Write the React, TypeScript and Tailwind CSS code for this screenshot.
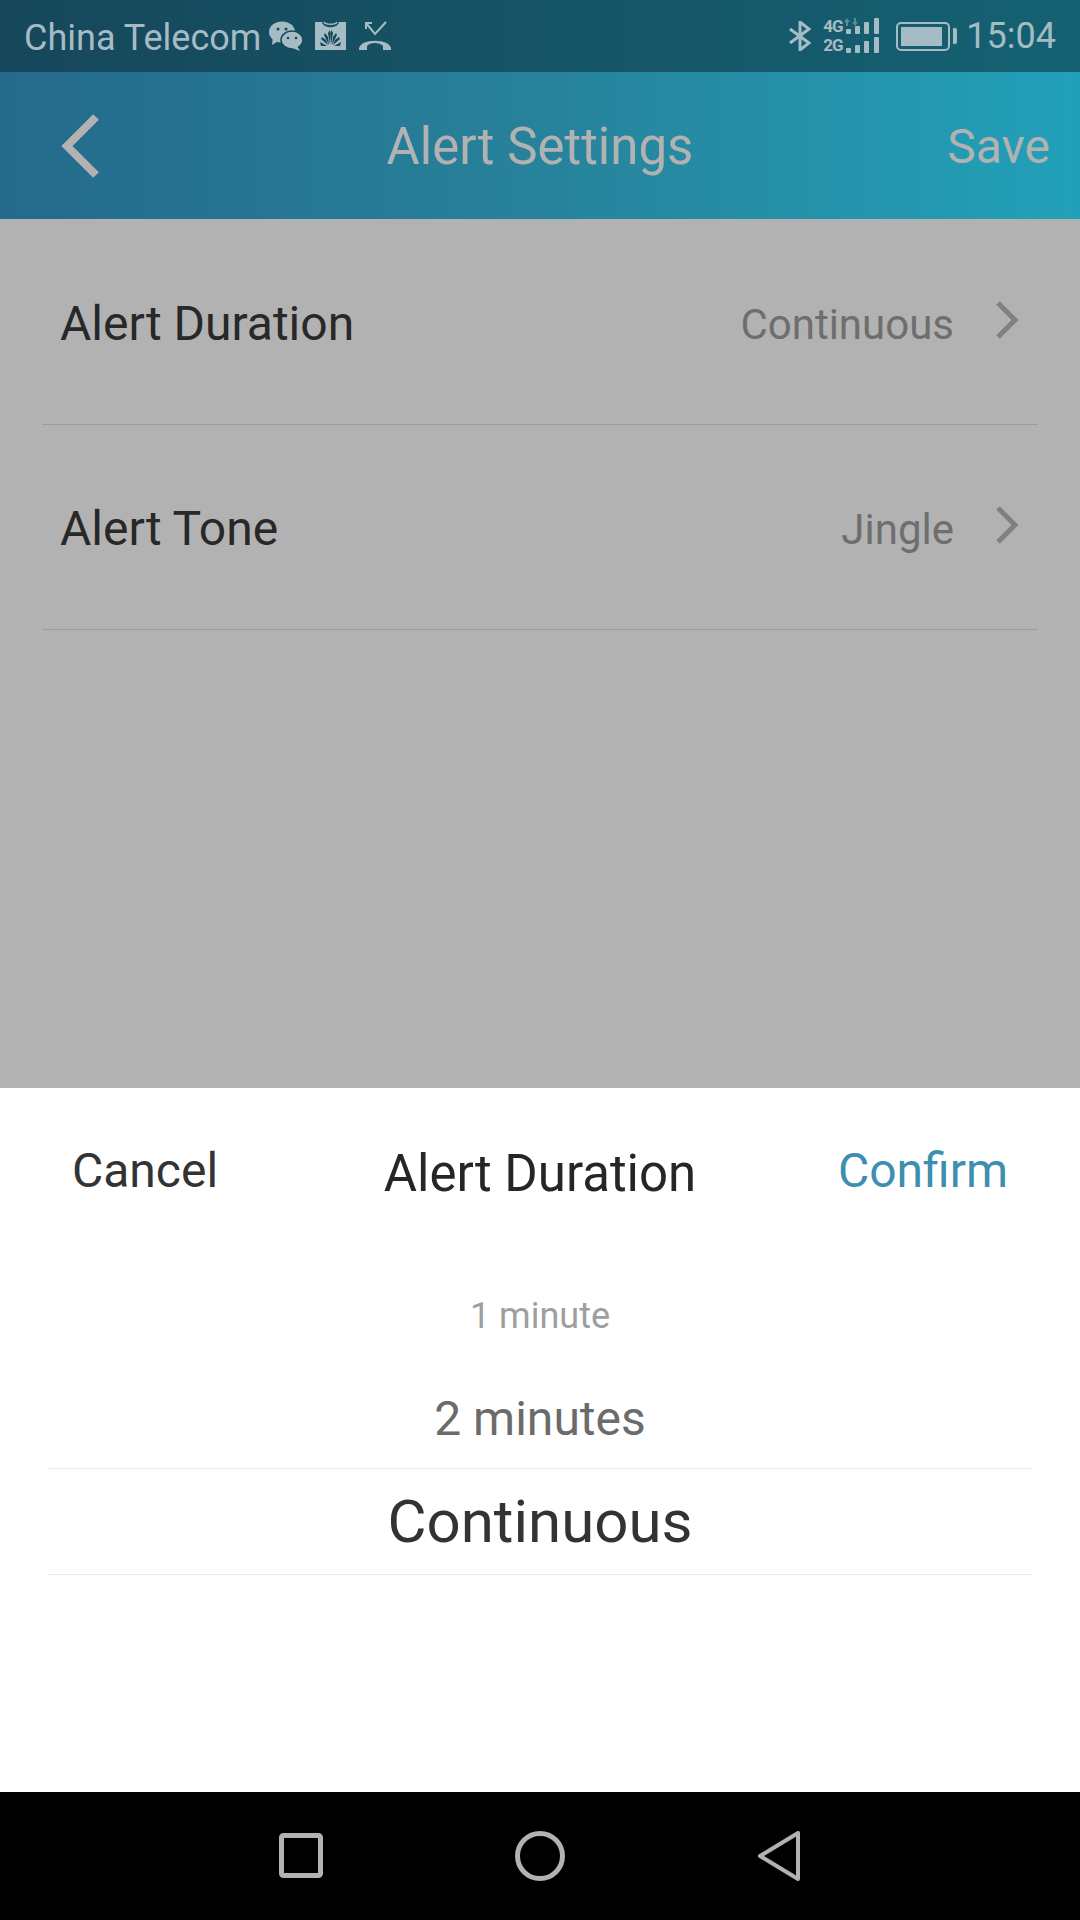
function WeChatIcon() {
  return (
    <svg width="34" height="30" viewBox="0 0 34 30" fill="#a6bcc4">
      <ellipse cx="13" cy="11" rx="13" ry="10.5" />
      <path d="M4 16 L3 24 L11 19 Z" />
      <ellipse cx="23" cy="19" rx="11" ry="9" stroke="#16485c" strokeWidth="1.5" />
      <path d="M28 25 L31 30 L23 27 Z" />
      <circle cx="9" cy="8" r="1.5" fill="#16485c" />
      <circle cx="17" cy="8" r="1.5" fill="#16485c" />
      <circle cx="19" cy="17" r="1.3" fill="#16485c" />
      <circle cx="27" cy="17" r="1.3" fill="#16485c" />
    </svg>
  )
}

function HuaweiBagIcon() {
  return (
    <svg width="31" height="30" viewBox="0 0 31 30">
      <path d="M0 1 H7 C8 8 23 8 24 1 H31 V29 H0 Z" fill="#a6bcc4" />
      <path d="M9 1 C10 4 21 4 22 1" stroke="#a6bcc4" strokeWidth="1.5" fill="none" />
      <g fill="#16485c">
        <path d="M15 24 L13 12 L15 9 L15.600 12 Z" />
        <path d="M16 24 L18 12 L16.500 9 L15.500 12 Z" />
        <path d="M14 24 L9 14 L10 12 L13 16 Z" />
        <path d="M17 24 L22 14 L21 12 L18 16 Z" />
        <path d="M13 24 L6 18 L7 16 L11 19 Z" />
        <path d="M18 24 L25 18 L24 16 L20 19 Z" />
        <path d="M12 25 H6 L5 21 Z" />
        <path d="M19 25 H25 L26 21 Z" />
      </g>
    </svg>
  )
}

function MissedCallIcon() {
  return (
    <svg width="34" height="30" viewBox="0 0 34 30" fill="none" stroke="#a6bcc4">
      <path d="M8 2 L17 13 L28 1" strokeWidth="2" />
      <path d="M7 2 H14 M8 1 V8" strokeWidth="2" />
      <path
        d="M1 28 C1 17 33 17 33 28 L33 29 L25 29 L25 25 C22 21 12 21 9 25 L9 29 L1 29 Z"
        fill="#a6bcc4"
        stroke="none"
      />
    </svg>
  )
}

function BluetoothIcon() {
  return (
    <svg width="22" height="30" viewBox="0 0 22 30" fill="none" stroke="#a6bcc4" strokeWidth="3">
      <path d="M1 8 L20 22 L11 29 V1 L20 8 L1 22" />
    </svg>
  )
}

function SignalBars() {
  return (
    <svg width="34" height="17" viewBox="0 0 34 17" fill="#a6bcc4">
      <rect x="0" y="11" width="5" height="5" rx="1" />
      <rect x="9" y="8" width="5" height="8" rx="1" />
      <rect x="18" y="4" width="5" height="12" rx="1" />
      <rect x="28" y="0" width="5" height="16" rx="1" />
    </svg>
  )
}

function SignalIcon() {
  return (
    <div className="relative flex flex-col gap-[2px] w-[57px]">
      {/* faint data arrows above the 4G row */}
      <svg className="absolute left-[21px] top-0" width="14" height="8" viewBox="0 0 14 8" fill="#5d8a97">
        <path d="M3 0 L6 4 H4 V8 H2 V4 H0 Z" />
        <path d="M11 8 L14 4 H12 V0 H10 V4 H8 Z" />
      </svg>
      {['4G', '2G'].map((net) => (
        <div key={net} className="flex items-end justify-between h-[17px]">
          <span className="text-[17px] leading-[17px] font-bold tracking-[-1px] text-[#a6bcc4]">{net}</span>
          <SignalBars />
        </div>
      ))}
    </div>
  )
}

function BatteryIcon() {
  return (
    <div className="flex items-center gap-[3px]">
      <div className="w-[54px] h-[29px] rounded-[5px] border-2 border-[#a6bcc4] p-[3px]">
        <div className="w-[41px] h-full bg-[#a6bcc4]" />
      </div>
      <div className="w-[4px] h-[16px] rounded-r-[2px] bg-[#a6bcc4]" />
    </div>
  )
}

function BackChevron() {
  return (
    <svg width="38" height="64" viewBox="0 0 38 64" fill="none" stroke="#b2b2b2" strokeWidth="8" className="ml-[61px]">
      <path d="M35 3 L6 32 L35 61" />
    </svg>
  )
}

function Chevron() {
  return (
    <svg width="24" height="38" viewBox="0 0 24 38" fill="none" stroke="#808080" strokeWidth="5" className="mb-[5px]">
      <path d="M3 2 L20 19 L3 36" />
    </svg>
  )
}

function SettingRow({ label, value }: { label: string; value: string }) {
  return (
    <div className="h-[205px] flex items-center justify-between mx-[42px] pl-[18px] pr-[19px] border-b border-[#9c9c9c]">
      <span className="text-[48px] pt-[4px] text-[#282828]">{label}</span>
      <div className="flex items-center gap-[41px]">
        <span className="text-[42px] pt-[4px] text-[#6e6e6e]">{value}</span>
        <Chevron />
      </div>
    </div>
  )
}

export default function App() {
  return (
    <div className="w-[1080px] h-[1920px] flex flex-col bg-white overflow-hidden font-['Roboto',sans-serif]">
      {/* status bar */}
      <div className="h-[72px] flex items-center pl-6 pr-6 bg-gradient-to-r from-[#16475b] to-[#146172] text-[#a6bcc4]">
        <span className="text-[36px] pt-[3px] mr-2">China Telecom</span>
        <div className="flex items-center gap-3">
          <WeChatIcon />
          <HuaweiBagIcon />
          <MissedCallIcon />
        </div>
        <div className="ml-auto flex items-center">
          <BluetoothIcon />
          <div className="ml-3 mr-4">
            <SignalIcon />
          </div>
          <BatteryIcon />
          <span className="text-[36px] ml-[9px]">15:04</span>
        </div>
      </div>

      {/* header */}
      <div className="h-[147px] grid grid-cols-[1fr_auto_1fr] items-center bg-gradient-to-r from-[#256a8b] via-[#27829b] to-[#21a1b9] text-[#b2b2b2]">
        <BackChevron />
        <span className="text-[51px] pt-[4px]">Alert Settings</span>
        <span className="text-[48px] pt-[2px] justify-self-end mr-[30px]">Save</span>
      </div>

      {/* dimmed list */}
      <div className="h-[869px] pt-[1px] bg-[#b2b2b2]">
        <SettingRow label="Alert Duration" value="Continuous" />
        <SettingRow label="Alert Tone" value="Jingle" />
      </div>

      {/* picker sheet */}
      <div className="h-[704px] bg-white">
        <div className="h-[173px] grid grid-cols-[1fr_auto_1fr] items-center px-[72px] pb-[7px]">
          <span className="text-[48px] text-[#333333]">Cancel</span>
          <span className="text-[51px] pt-[6px] text-[#262626]">Alert Duration</span>
          <span className="text-[48px] text-[#3d8eb0] justify-self-end">Confirm</span>
        </div>
        <div className="flex flex-col items-center mx-[48px]">
          <div className="h-[104px] pt-[6px] flex items-center text-[36px] text-[#9e9e9e]">1 minute</div>
          <div className="h-[104px] pt-[5px] w-full flex items-center justify-center text-[48px] text-[#6b6b6b] border-b border-[#e8e8e8]">
            2 minutes
          </div>
          <div className="h-[106px] w-full flex items-center justify-center text-[60px] text-[#333333] border-b border-[#e8e8e8]">
            Continuous
          </div>
        </div>
      </div>

      {/* android nav */}
      <div className="h-[128px] bg-black flex items-center justify-center gap-[192px] pb-[1px]">
        <svg width="44" height="45" viewBox="0 0 44 45" fill="none" stroke="#b2b2b2" strokeWidth="5">
          <rect x="2.500" y="2.500" width="39" height="40" rx="2" />
        </svg>
        <svg width="50" height="50" viewBox="0 0 50 50" fill="none" stroke="#b2b2b2" strokeWidth="5">
          <circle cx="25" cy="25" r="22.500" />
        </svg>
        <svg width="44" height="50" viewBox="0 0 44 50" fill="none" stroke="#b2b2b2" strokeWidth="4" strokeLinejoin="round">
          <path d="M41 2 V48 L3 25 Z" />
        </svg>
      </div>
    </div>
  )
}
